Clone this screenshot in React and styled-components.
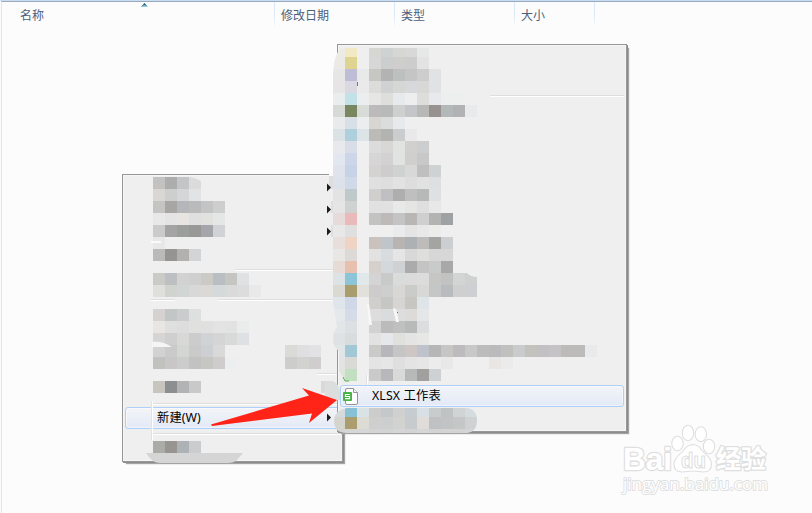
import React from 'react';
import styled, { createGlobalStyle } from 'styled-components';

const Global = createGlobalStyle`
  * { box-sizing: border-box; }
  body { margin: 0; background: #fcfcfc; overflow: hidden; font: 12px/16px "Noto Sans", "Noto Sans CJK SC", sans-serif; }
`;

const Page = styled.main`
  position: relative;
  width: 812px;
  height: 513px;
  overflow: hidden;
  background: #fcfcfc;
  border-top: 1px solid #cadcf0;
`;
const Pane = styled.section`
  height: 512px;
  margin-left: 1px;
  border-top: 1px solid #98aac0;
  border-left: 1px solid #d8e5f3;
`;
const Header = styled.header`
  display: flex;
  height: 25px;
`;
const Column = styled.div`
  width: ${(p) => p.$width}px;
  padding: 5px 0 0 ${(p) => p.$pad || 6}px;
  color: #4c607a;
  font-family: "Noto Sans CJK SC", sans-serif;
  border-right: 1px solid;
  border-image: linear-gradient(#d6e6f6, #e0ecf8 60%, #fcfcfc) 1;
`;
const SortMark = styled.svg`
  position: absolute;
  left: 141px;
  top: 2px;
`;

const Menu = styled.div`
  position: absolute;
  left: ${(p) => p.$x}px;
  top: ${(p) => p.$y}px;
  width: ${(p) => p.$w}px;
  height: ${(p) => p.$h}px;
  padding: ${(p) => p.$pad}px 2px 0;
  background: #efefef;
  border: 1px solid #979797;
  box-shadow: inset 0 0 0 1px #f5f5f5, 1px 1px 0 #8c8c8c, 3px 3px 1px -1px #a4a4a4;
`;
const MenuItem = styled.div`
  display: flex;
  align-items: center;
  height: 22px;
  padding-left: ${(p) => p.$pad}px;
  color: #000;
  font-size: 12.3px;
  letter-spacing: ${(p) => p.$track || 0}px;
  border: 1px solid #aecff7;
  border-radius: 3px;
  background: linear-gradient(#f2f4f7, #e3eaf6);
  box-shadow: inset 0 0 0 1px rgba(255, 255, 255, 0.45);
`;
const SheetIcon = styled.svg`
  flex: none;
  margin-right: 14px;
`;
const Overlay = styled.svg`
  position: absolute;
  left: 0;
  top: -1px;
`;

const leftRows = [
  [177, 'c3c2c0 adadad c4c5c7 dbdbdc'],
  [189, 'd8d7d4 cccfce d5d6d7 e1e3e5'],
  [201, 'c4c4c2 a8a6a4 b5b6b9 bababa c3c4c6 cecece'],
  [213, 'e8e8e8 e4e4e4 e7e4e2 dfdfdf e1e1df e5e7e6'],
  [225, 'cccbc9 a4a4a4 9c9e9c 989896 a5a6ab d1d2d5'],
  [237, 'e8e8e8'],
  [249, 'bababa 959492 b3b1af d2d4d6'],
  [273, 'cbcac7 bdc0c2 d2d2d2 cfcfd0 cbcac5 b8bec1 c5c5c2 dfe1e3'],
  [285, 'dfdfdc d0d3ce d1d5d4 d8d8d8 dad9d5 d4d9d9 dadada dcdcdc e9e9e9'],
  [309, 'd4d3d1 c3c6c6 caccce dee0df'],
  [321, 'e7e6e3 dfdfdf dddddd e0e0de e0e0e0 e3e3e3 e2e2e2 eaeceb'],
  [333, 'd6d5d3 cfcfcf d8d8d6 cccccc d0d2d3 d5d5d5 d8dad9 dfe0e3'],
  [345, 'd3d2d2 cbcaca d4d6d4 cbcaca cdcfd2 dad9da - - - - - dadad7 dfdfe2 e2e2e4'],
  [357, 'c1c1bf c8c6c6 cccccd c2c2c2 c6c6c5 cfccce eceef0 - - - - cdcdcb d2d2d0 cfcdce'],
  [381, 'c8c5bf 8d8e90 b2b3b5 c9c9ca - - - - - - - - - - d9d9d9'],
  [441, 'ababa7 989490 adb2b7 cbccce'],
];

const rightRows = [
  [45, 'ecebe6 f0e9c3 efefef d6d6d3 cfd2d3 d6d6d5 d8d8d8 e6e8e7'],
  [57, 'eceae4 dfd391 efefef d7d7d7 cbcecc cfcecc cdcdcd e3e3e3'],
  [69, 'e6e6e6 bebdd5 e8eae9 c6c6c3 b3b3b3 bec0bf c5c5c5 cdcdcd e1e2e3'],
  [81, 'e6e4e5 dad8e0 eaeaea dcdcda cfd1d2 d6d6d5 d7d8dc d8d8d6 e1e2e4'],
  [93, 'eaedee c3e2e7 ecedef e6e6e4 dedfdd e8e9ed eeeeee dddedb e8e9ed edefee edefee'],
  [105, 'd6dad5 788760 d7dcd6 bcbabb b8bab9 cfcfcf c4c5c8 b8b8b6 97918f b3b8b8 b0b2b4 e9eaec'],
  [117, 'e8eaeb d8dfe5 ecedef d7d6d3 dadddb e8e9ed'],
  [129, 'dbe2e5 b0cfdd dde4e8 bdbbb8 b3b3b1 cbccce e9e9ea'],
  [141, 'e8e9ec d9dde7 - dcdcdc d9d7d5 e1e3e1 d1d0ce cccdcf'],
  [153, 'e3e7ef ccd6e8 - d6d6d6 d3d1d1 e1e3e2 d0cfcd c8c8c8'],
  [165, 'e0e3eb c6d2e6 - d4d3d1 cfcccd cfd2d1 d8d8d8 bfbfbf ced2d3'],
  [177, 'dde2ea cfd9e7 - e0e0e0 dddedd e2e2e2 dddddd e1e1e1 dddfe0'],
  [189, 'e3e3e3 becac9 - d0cfcd c0c0c2 aeaeae bfbfbf b7b9b8 dee0e2'],
  [201, 'e5e5e5 d0d2d1 - e1e1e1 e1e1e1 e8eae9 e5e5e3 dfdfdf e8e8e8'],
  [213, 'e7dada eab9b9 - c3c3c1 bebab9 c4c4c4 b8b7b5 cfcfcf b3b3b1 9fa1a3'],
  [225, 'e8e8e8 dfdfdf - - - eaebec e4e4e4 e8e8e8 ececea'],
  [237, 'e8dfdc efd3c5 - cac3bd c0c4cb b8b4b1 adb1b4 bdbcba a4a4a2 cdced1'],
  [249, 'e8e7e5 ddd9d6 - e3e2e3 d9dcde e5e5e5 d8d8d8 dededd d7d7d7 d7d7d7'],
  [261, 'e7dbd6 e8c0b0 - d6d0cd d2d8db d0d1d3 ababab c4c4c4 c9cbca a8a8a8'],
  [273, 'dbe3e6 8cc5d7 e0e8ea d4d4d4 c8cac9 dadcdb dbdbdb dcdcdc c6c6c4 c2c2c2 d3d5d4 cfd1d0'],
  [285, 'dadad2 a99c6d e1e0da cdcbcc cdcfce d9d7d5 caccca d8d8d6 c5c7c6 b9bbbe cfcfcf cecfd2'],
  [297, 'e0e4eb d0d7e6 - d0cfcd c6c6c4 d6d5d3 c8c6c0 dee4e8'],
  [309, 'e6e9ec d5dbe7 - dddddd d9dbdc dddddd dcdbd9 e5e6e8'],
  [321, 'e3e6e9 dde0e3 - d2d2d2 bbbbbb c0c0c0 b8baba dcddde'],
  [333, 'dfe2e4 d9dcdd - e2e2e2 e6e7ea e0e0de e4e4e4 e7e8e6'],
  [345, 'e0e5e7 a2c8d5 - cacac8 b7b7bb c5c5c5 cdc6c4 bec2ca b6b6b6 c6c6c4 bdbbbe c8c8c8 bcbcbc bababd c0c0be c9cbcc c3c2bd c1c1c4 c5c3c6 bcbbba bcbbba e8eaec'],
  [357, 'e3e3e3 d9d9d7 - e4e4e4 e6e6e6 dedfde e4e4e4 e6e6e6 ececec e8e8e8 - - - e8e7e5 ebebeb'],
  [369, 'dfe5dd c3dfc1 - cacaca b8b8bc d9d9d7 b7b9b8 a2a09e ced1d3'],
];

const tailRows = [
  [405, 'd5dbdd 87c1d6 d9e3e6 cccccc c4c8c8 d0d0d0 c5cdd0 d9e0e5 c9cccd c0c3c4 d0d4d5 d5dce0'],
  [417, 'd5d5cf ab9d6d dddcd4 cfcfcf cccfce d2d2d0 c8cbce dfdcd9 bfc1c3 c1c3c4 c5c7c6 cfd1d3'],
  [429, 'd4d4d4 d6d6d4 d6d6d6 d4d4d4 d3d3d3 d5d5d5 d3d3d3 d6d6d6 d3d3d3 d4d4d4 d3d3d3 d5d5d5'],
];

function Mosaic({ x, rows, clip }) {
  return (
    <g shapeRendering="crispEdges" clipPath={clip}>
      {rows.map(([y, cells]) =>
        cells.split(' ').map((c, i) =>
          c === '-' ? null : (
            <rect key={`${y}-${i}`} x={x + i * 12} y={y} width="12" height="12" fill={`#${c}`} />
          ),
        ),
      )}
    </g>
  );
}

function Groove({ x1, x2, y }) {
  return (
    <g shapeRendering="crispEdges">
      <rect x={x1} y={y} width={x2 - x1} height="1" fill="#dedede" />
      <rect x={x1} y={y + 1} width={x2 - x1} height="1" fill="#fff" />
    </g>
  );
}

function Gutter({ x, y1, y2 }) {
  return (
    <g shapeRendering="crispEdges">
      <rect x={x} y={y1} width="1" height={y2 - y1} fill="#e1e2e3" />
      <rect x={x + 1} y={y1} width="1" height={y2 - y1} fill="#fff" />
    </g>
  );
}

const Arrow = ({ y }) => <path d={`M327 ${y - 4}v8l4-4z`} fill="#1c1c1c" />;

function Watermark() {
  return (
    <g fill="#fff" stroke="#dfdfdf" strokeWidth="1.1" strokeLinejoin="round" fontFamily='"Liberation Sans", sans-serif'>
      <g fontWeight="700" strokeWidth="2.6" paintOrder="stroke">
        <text x="623" y="470" fontSize="32" textLength="49" lengthAdjust="spacingAndGlyphs">Bai</text>
        <text x="716" y="468" fontSize="25" textLength="50" fontFamily='"Noto Sans CJK SC", sans-serif'>经验</text>
      </g>
      <ellipse cx="677.5" cy="443.5" rx="5.700" ry="7.300" />
      <ellipse cx="688" cy="433" rx="5.700" ry="7.700" />
      <ellipse cx="700.8" cy="434.2" rx="5.700" ry="7.400" />
      <ellipse cx="709" cy="446.500" rx="5.700" ry="7.300" />
      <path d="M693 444.500c5 0 7.500 3.500 9.500 6.500 3 4 9 6 9 13 0 5-3 8-8 8-4 0-6-1-10.500-1s-7 1-11 1c-5 0-8-3-8-8 0-7 6-9 9-13 2-3 5-6.500 10-6.500z" />
      <text x="681" y="467.500" fontSize="22" textLength="25" lengthAdjust="spacingAndGlyphs" fontWeight="700">du</text>
      <text x="623" y="489.500" fontSize="16.500" textLength="145" lengthAdjust="spacingAndGlyphs" strokeWidth="1.800" paintOrder="stroke" fontFamily='"Open Sans", sans-serif'>jingyan.baidu.com</text>
    </g>
  );
}

export default function App() {
  return (
    <Page>
      <Global />
      <Pane>
        <Header>
          <Column $width={273} $pad={18}>名称</Column>
          <Column $width={120}>修改日期</Column>
          <Column $width={120}>类型</Column>
          <Column $width={80}>大小</Column>
        </Header>
      </Pane>
      <SortMark width="7" height="4" viewBox="0 0 7 4">
        <path d="M0 4 3.500 0 7 4z" fill="#8ccbe0" />
        <path d="M0 4 3.500 0 6 3 3 2z" fill="#2e5f78" />
      </SortMark>

      <Menu $x={122} $y={173} $w={221} $h={288} $pad={232}>
        <MenuItem $pad={31} $track={0.1}>新建(W)</MenuItem>
      </Menu>
      <Overlay width="812" height="513">
        <Groove x1={235} x2={338} y={269} />
        <Groove x1={151} x2={175} y={299} />
        <Groove x1={218} x2={338} y={299} />
        <Groove x1={317} x2={338} y={373} />
        <Groove x1={152} x2={341} y={403} />
        <Groove x1={152} x2={341} y={433} />
        <Gutter x={151} y1={401} y2={440} />
        <Mosaic x={153} rows={leftRows} />
        <path d="M151 241h10v2h-10z" fill="#fafafa" />
        <path d="M189 176h14v7q-5-5-14-6z" fill="#efefef" />
        <path d="M152 342q11-1 20 5h-20z" fill="#f5f5f5" />
        <path d="M146 453h97l-6 7q-3 3-9 3h-68q-8 0-14-10z" fill="#d5d5d5" />
        <Arrow y={417.5} />
      </Overlay>

      <Menu $x={337} $y={43} $w={290} $h={388} $pad={340}>
        <MenuItem $pad={2} $track={0.15}>
          <SheetIcon width="15" height="17" viewBox="0 0 15 17">
            <path d="M3.500.5h7l4 4V15q0 1.500-1.500 1.500H4Q2.500 16.500 2.500 15V2Q2.500.5 4 .5z" fill="#fff" stroke="#949494" />
            <path d="M10.500.5v4h4" fill="#f5f5f5" stroke="#949494" />
            <rect x="0" y="4" width="9" height="9" rx="1" fill="#46b446" />
            <path d="M6.800 6.500H2.500v2h4v2.200H2" fill="none" stroke="#fff" strokeWidth="1.200" />
          </SheetIcon>
          XLSX 工作表
        </MenuItem>
      </Menu>
      <Overlay width="812" height="513">
        <defs>
          <clipPath id="bodyClip">
            <path d="M345 48H597V382H351Q345 382 343 377L339 371V351Q333 347 333 339 333 331 337 327L333 303V75Q334 48 345 48z" />
          </clipPath>
          <clipPath id="tailClip">
            <path d="M347 408H468Q477 410 477 420 477 432 467 433H347Q334 433 334 420 335 410 347 408z" />
          </clipPath>
        </defs>
        <path d="M333 58h6v-2q-2 7-3 18h-3z" fill="#fcfcfc" />
        <path d="M333 300h5v27h-2z" fill="#efefef" />
        <rect x="329" y="174" width="4" height="2" fill="#fcfcfc" />
        <Groove x1={490} x2={624} y={95} />
        <Mosaic x={333} rows={rightRows} clip="url(#bodyClip)" />
        <rect x="329" y="176" width="4" height="13" fill="#dedede" />
        <rect x="331" y="201" width="2" height="12" fill="#dedede" />
        <rect x="331" y="225" width="2" height="12" fill="#dedede" />
        <Arrow y={187.5} />
        <Arrow y={209.5} />
        <Arrow y={231.5} />
        <path d="M357.5 82v4" stroke="#777" />
        <path d="M367 304h2l3 21h-3zM393 308l3 1 3 13h-3z" fill="#f8f8f8" />
        <rect x="397" y="312" width="1" height="1" fill="#7a6a60" />
        <path d="M467 273h11v4q-8 0-11-4z" fill="#efefef" />
        <path d="M325 381h8q6 3 7 10v9h-15z" fill="#dcdedd" />
        <path d="M343 377l2 4h4" fill="none" stroke="#55ae50" />
        <Gutter x={366} y1={375} y2={385} />
        <Mosaic x={333} rows={tailRows} clip="url(#tailClip)" />
        <path d="M211 424.500L309 395.500 302 388 337 400 309 423 312 413.500 212 426z" fill="#ff2318" />
        <Watermark />
      </Overlay>
    </Page>
  );
}
